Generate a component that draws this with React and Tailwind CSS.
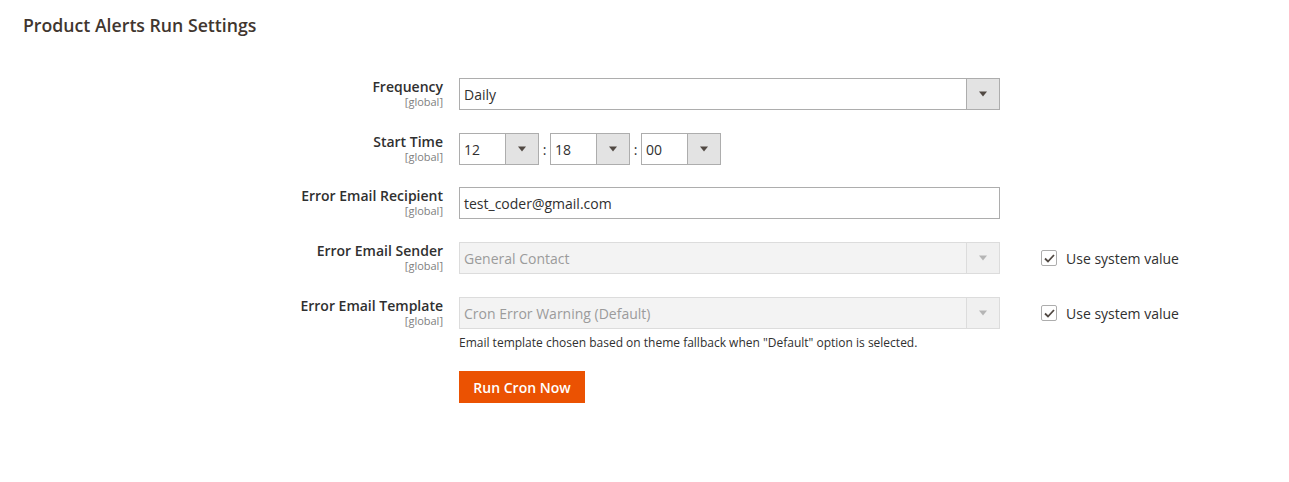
const font = { fontFamily: '"Open Sans", "Liberation Sans", sans-serif' };

const Arrow = ({ disabled }) => (
  <svg width="10" height="6" viewBox="0 0 10 6">
    <path d="M1 0.5h8L5 5.5z" fill={disabled ? "#b5b5b5" : "#514943"} />
  </svg>
);

const Select = ({ value, width, disabled }) => (
  <div
    className={`flex h-[32px] border ${
      disabled ? "border-[#dcdcdc] bg-[#f3f3f3] text-[#9b9b9b]" : "border-[#adadad] bg-white text-[#303030]"
    } ${width}`}
  >
    <div className="flex flex-1 items-center pl-[4px] text-[14px]">{value}</div>
    <div
      className={`flex w-[33px] items-center justify-center border-l ${
        disabled ? "border-[#dcdcdc] bg-[#f0f0f0]" : "border-[#adadad] bg-[#e3e3e3]"
      }`}
    >
      <Arrow disabled={disabled} />
    </div>
  </div>
);

const Label = ({ text }) => (
  <div className="w-[443px] shrink-0 text-right">
    <div className="text-[14px] font-semibold leading-[18px] text-[#303030]">{text}</div>
    <div className="text-[11px] leading-[11px] text-[#808080]">[global]</div>
  </div>
);

const SystemValue = () => (
  <label className="ml-[25px] flex items-center text-[14px] text-[#303030]">
    <span className="flex h-[16px] w-[16px] items-center justify-center rounded-[2px] border border-[#adadad] bg-white">
      <svg width="11" height="9" viewBox="0 0 11 9">
        <path d="M1 4.5l3 3L10 1" fill="none" stroke="#514943" strokeWidth="1.8" />
      </svg>
    </span>
    <span className="ml-[9px]">Use system value</span>
  </label>
);

export default function App() {
  return (
    <div className="min-h-[482px] bg-white" style={font}>
      <div className="px-[23px] pt-[14px] text-[17.7px] font-semibold leading-[22px] text-[#41362f]">
        Product Alerts Run Settings
      </div>

      <div className="mt-[42px] flex flex-col">
        <div className="flex items-start gap-[16px]">
          <Label text="Frequency" />
          <Select value="Daily" width="w-[541px]" />
        </div>

        <div className="mt-[23px] flex items-start gap-[16px]">
          <Label text="Start Time" />
          <div className="flex items-center text-[14px] text-[#303030]">
            <Select value="12" width="w-[80px]" />
            <span className="w-[11px] text-center">:</span>
            <Select value="18" width="w-[80px]" />
            <span className="w-[11px] text-center">:</span>
            <Select value="00" width="w-[80px]" />
          </div>
        </div>

        <div className="mt-[22px] flex items-start gap-[16px]">
          <Label text="Error Email Recipient" />
          <div className="flex h-[32px] w-[541px] items-center border border-[#adadad] pl-[4px] text-[14px] text-[#303030]">
            test_coder@gmail.com
          </div>
        </div>

        <div className="mt-[23px] flex items-start gap-[16px]">
          <Label text="Error Email Sender" />
          <Select value="General Contact" width="w-[541px]" disabled />
          <div className="flex h-[32px] items-center">
            <SystemValue />
          </div>
        </div>

        <div className="mt-[23px] flex items-start gap-[16px]">
          <Label text="Error Email Template" />
          <div className="flex flex-col">
            <Select value="Cron Error Warning (Default)" width="w-[541px]" disabled />
            <div className="mt-[6px] text-[12px] leading-[16px] text-[#303030]">
              Email template chosen based on theme fallback when "Default" option is selected.
            </div>
            <button className="mt-[20px] h-[32px] w-[126px] bg-[#eb5202] text-[14px] font-semibold text-white">
              Run Cron Now
            </button>
          </div>
          <div className="flex h-[32px] items-center">
            <SystemValue />
          </div>
        </div>
      </div>
    </div>
  );
}
